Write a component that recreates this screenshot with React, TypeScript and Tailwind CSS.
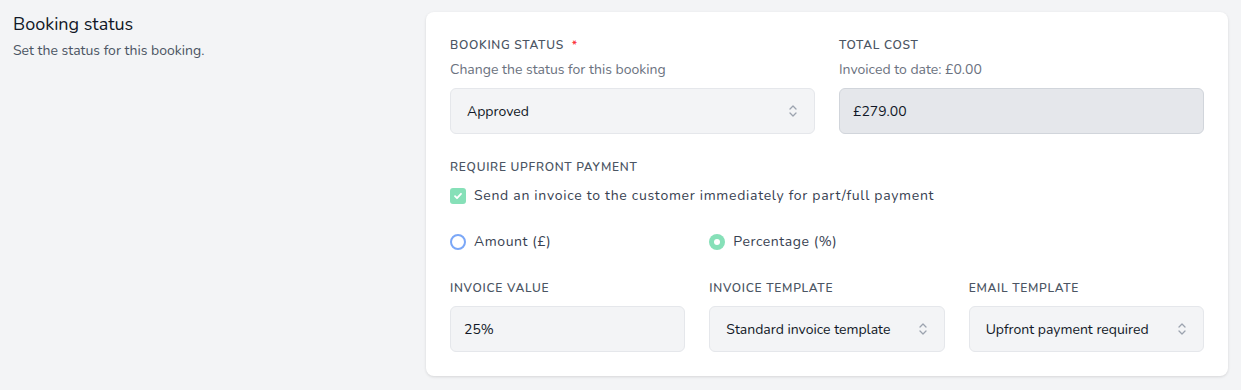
import React from "react";

function UpDown() {
  return (
    <svg width="10" height="16" viewBox="0 0 10 16" fill="none" stroke="#9ca3af" strokeWidth="1.3" strokeLinecap="round" strokeLinejoin="round">
      <path d="M2 6l3-3 3 3" />
      <path d="M2 10l3 3 3-3" />
    </svg>
  );
}

function Label({ children, required }: { children: React.ReactNode; required?: boolean }) {
  return (
    <div className="text-[12px] font-semibold uppercase leading-4 tracking-[0.06em] text-[#4b5563]">
      {children}
      {required && <span className="ml-2 text-red-500">*</span>}
    </div>
  );
}

function Select({ value }: { value: string }) {
  return (
    <div className="flex h-[46px] items-center justify-between rounded-md border border-[#e5e7eb] bg-[#f3f4f6] pl-4 pr-4 text-[14px] text-[#111827]">
      <span>{value}</span>
      <UpDown />
    </div>
  );
}

export default function App() {
  return (
    <main
      className="flex min-h-[390px] bg-[#f3f4f6] pl-[13px] pt-3 pr-[13px]"
      style={{ fontFamily: "'Nunito', 'Noto Sans', sans-serif" }}
    >
      <section className="w-[413px] shrink-0">
        <h2 className="text-[18px] leading-6 text-[#111827]">Booking status</h2>
        <p className="mt-[5px] text-[14px] leading-5 text-[#4b5563]">Set the status for this booking.</p>
      </section>

      <section className="h-[364px] w-[802px] rounded-lg bg-white px-6 pt-[25px] shadow-[0_1px_3px_rgba(0,0,0,0.12)]">
        <div className="grid grid-cols-2 gap-6">
          <div>
            <Label required>Booking status</Label>
            <p className="mt-[7px] text-[14px] leading-5 text-[#6b7280]">Change the status for this booking</p>
            <div className="mt-2">
              <Select value="Approved" />
            </div>
          </div>
          <div>
            <Label>Total cost</Label>
            <p className="mt-[7px] text-[14px] leading-5 text-[#6b7280]">Invoiced to date: £0.00</p>
            <div className="mt-2 flex h-[46px] items-center rounded-md border border-[#d1d5db] bg-[#e5e7eb] px-[13px] text-[14px] text-[#111827]">
              £279.00
            </div>
          </div>
        </div>

        <div className="mt-[25px]">
          <Label>Require upfront payment</Label>
          <label className="mt-[11px] flex items-center gap-2 text-[14px] leading-5 tracking-[0.05em] text-[#374151]">
            <span className="flex h-4 w-4 items-center justify-center rounded-[3px] bg-[#86e0b8]">
              <svg width="10" height="10" viewBox="0 0 10 10" fill="none" stroke="white" strokeWidth="1.8" strokeLinecap="round" strokeLinejoin="round">
                <path d="M2 5.2l2 2 4-4.4" />
              </svg>
            </span>
            Send an invoice to the customer immediately for part/full payment
          </label>
        </div>

        <div className="mt-[26px] grid grid-cols-3 gap-6 text-[14px] leading-5 tracking-[0.04em] text-[#374151]">
          <label className="flex items-center gap-2">
            <span className="h-4 w-4 rounded-full border-2 border-[#7ba7f7]" />
            Amount (£)
          </label>
          <label className="flex items-center gap-2">
            <span className="flex h-4 w-4 items-center justify-center rounded-full bg-[#86e0b8]">
              <span className="h-[6px] w-[6px] rounded-full bg-white" />
            </span>
            Percentage (%)
          </label>
        </div>

        <div className="mt-[28px] grid grid-cols-3 gap-6">
          <div>
            <Label>Invoice value</Label>
            <div className="mt-[10px] flex h-[46px] items-center rounded-md border border-[#e5e7eb] bg-[#f3f4f6] px-[13px] text-[14px] text-[#111827]">
              25%
            </div>
          </div>
          <div>
            <Label>Invoice template</Label>
            <div className="mt-[10px]">
              <Select value="Standard invoice template" />
            </div>
          </div>
          <div>
            <Label>Email template</Label>
            <div className="mt-[10px]">
              <Select value="Upfront payment required" />
            </div>
          </div>
        </div>
      </section>
    </main>
  );
}
